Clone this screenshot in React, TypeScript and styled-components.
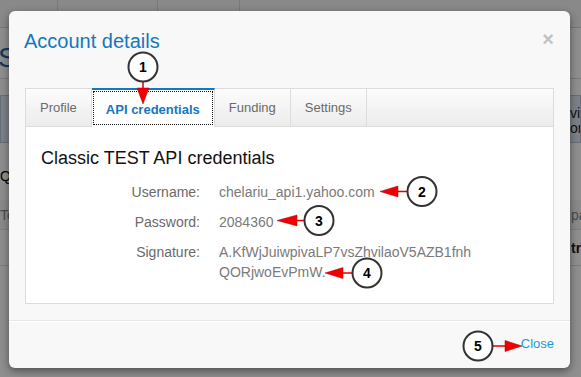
import React from 'react';
import styled, { createGlobalStyle } from 'styled-components';

const GlobalStyle = createGlobalStyle`
  html, body {
    margin: 0;
    padding: 0;
  }
  body {
    width: 581px;
    height: 377px;
    overflow: hidden;
    font-family: "Liberation Sans", Arial, sans-serif;
    background: #fff;
  }
`;

const Page = styled.div`
  position: relative;
  width: 581px;
  height: 377px;
  overflow: hidden;
  background: #fff;
`;

/* the page that sits under the dimmed backdrop */
const BackNav = styled.div`
  display: flex;
  height: 28px;
  background: #f4f4f4;
  border-bottom: 1px solid #d4d4d4;
  box-sizing: border-box;
`;

const NavCell = styled.div<{ $w: number }>`
  width: ${(p) => p.$w}px;
  border-right: 1px solid #d8d8d8;
  box-sizing: border-box;
`;

const BackTitle = styled.div`
  height: 51px;
  border-bottom: 1px solid #dcdcdc;
  box-sizing: border-box;
  padding-top: 15px;
  margin-left: -2px;
  font-size: 28px;
  line-height: 30px;
  color: #1d6aa4;
  white-space: nowrap;
`;

const BackRow = styled.div<{ $h: number; $bg?: string; $border?: string }>`
  display: flex;
  justify-content: space-between;
  align-items: center;
  height: ${(p) => p.$h}px;
  background: ${(p) => p.$bg || 'transparent'};
  border-bottom: ${(p) => (p.$border ? `1px solid ${p.$border}` : 'none')};
  box-sizing: border-box;
  font-size: 14px;
  white-space: nowrap;
`;

const AlertBox = styled.div`
  display: flex;
  justify-content: space-between;
  align-items: center;
  margin-top: 16px;
  height: 48px;
  background: #dfe8f3;
  border: 1px solid #b4c4d8;
  box-sizing: border-box;
  font-size: 14px;
  line-height: 15px;
  color: #223;
  padding-top: 4px;
`;

const EdgeText = styled.div<{ $color?: string; $bold?: boolean }>`
  width: 10px;
  overflow: hidden;
  white-space: nowrap;
  color: ${(p) => p.$color || '#222'};
  font-weight: ${(p) => (p.$bold ? 700 : 400)};
`;

const Backdrop = styled.div`
  position: absolute;
  inset: 0;
  background: rgba(0, 0, 0, 0.44);
`;

/* modal */
const Modal = styled.div`
  position: absolute;
  left: 9px;
  top: 11px;
  width: 561px;
  height: 357px;
  display: flex;
  flex-direction: column;
  background: #f8f8f8;
  border-radius: 6px;
  box-shadow: 0 3px 9px rgba(0, 0, 0, 0.45);
  overflow: hidden;
`;

const Header = styled.div`
  display: flex;
  justify-content: space-between;
  align-items: flex-start;
  height: 66px;
  padding: 18px 16px 0 15px;
  box-sizing: border-box;
`;

const Title = styled.h3`
  margin: 0;
  font-size: 20px;
  line-height: 24px;
  font-weight: 400;
  color: #1577be;
`;

const CloseX = styled.span`
  font-size: 20px;
  line-height: 20px;
  font-weight: 700;
  color: #c2c2c2;
`;

const Body = styled.div`
  padding: 11px 16px 16px;
`;

const TabPanel = styled.div`
  height: 216px;
  display: flex;
  flex-direction: column;
  background: #fff;
  border: 1px solid #dcdcdc;
  box-sizing: border-box;
`;

const TabBar = styled.div`
  display: flex;
  height: 38px;
  background: linear-gradient(#fcfcfc, #ececec);
  border-bottom: 1px solid #dcdcdc;
  box-sizing: border-box;
`;

const Tab = styled.div<{ $active?: boolean }>`
  position: relative;
  display: flex;
  align-items: center;
  padding: 0 14px;
  border-right: 1px solid #dcdcdc;
  font-size: 13px;
  color: ${(p) => (p.$active ? '#1577be' : '#6a6a6a')};
  font-weight: ${(p) => (p.$active ? 700 : 400)};
  background: ${(p) => (p.$active ? '#fff' : 'transparent')};
  ${(p) =>
    p.$active &&
    `
    margin-top: -1px;
    margin-bottom: -1px;
    border-top: 2px solid #1577be;
    padding-top: 1px;
    &::after {
      content: '';
      position: absolute;
      left: 1px;
      right: 1px;
      top: 1px;
      bottom: 2px;
      border: 1px dotted #111;
    }
  `}
`;

const TabContent = styled.div`
  padding: 20px 15px;
`;

const Heading = styled.h4`
  margin: 0 0 13px;
  font-size: 18px;
  line-height: 22px;
  font-weight: 400;
  color: #111;
`;

const Fields = styled.div`
  display: grid;
  grid-template-columns: 159px 1fr;
  column-gap: 19px;
  row-gap: 10px;
  font-size: 14px;
  line-height: 20px;
`;

const Label = styled.div`
  text-align: right;
  color: #6a6a6a;
`;

const Value = styled.div`
  color: #7a7a7a;
`;

const Footer = styled.div`
  display: flex;
  justify-content: flex-end;
  align-items: center;
  height: 48px;
  padding: 0 16px 2px;
  border-top: 1px solid #e6e6e6;
  box-shadow: inset 0 1px 0 #fff;
  box-sizing: border-box;
`;

const CloseLink = styled.a`
  font-size: 13px;
  color: #1b9ad8;
  text-decoration: none;
`;

const Marks = styled.svg`
  position: absolute;
  inset: 0;
  pointer-events: none;
`;

type Callout = { n: number; cx: number; cy: number; line: string; tri: string };

const callouts: Callout[] = [
  { n: 1, cx: 143, cy: 67, line: 'M143 82 V89', tri: '137,88 149,88 143,104' },
  { n: 2, cx: 422, cy: 191.5, line: 'M407 191.5 H397', tri: '398,186 398,197 380,191.5' },
  { n: 3, cx: 319, cy: 220.5, line: 'M304 220.5 H296', tri: '297,215 297,226 277,220.5' },
  { n: 4, cx: 367, cy: 273, line: 'M352 273 H342', tri: '343,267.5 343,278.5 325,273' },
  { n: 5, cx: 478, cy: 346, line: 'M493 346 H506', tri: '505,340.5 505,351.5 522,346' },
];

const Annotations = () => (
  <Marks width="581" height="377" viewBox="0 0 581 377">
    {callouts.map((c) => (
      <g key={c.n}>
        <path d={c.line} stroke="#e00000" strokeWidth="1.5" fill="none" />
        <polygon points={c.tri} fill="#f00000" stroke="#b00000" strokeWidth="0.5" />
        <circle cx={c.cx} cy={c.cy} r="14.5" fill="#fff" stroke="#333" strokeWidth="2" />
        <text
          x={c.cx}
          y={c.cy + 5}
          textAnchor="middle"
          fontFamily='"Liberation Sans", Arial, sans-serif'
          fontSize="14"
          fontWeight="700"
          fill="#000"
        >
          {c.n}
        </text>
      </g>
    ))}
  </Marks>
);

const App = () => (
  <Page>
    <GlobalStyle />
    <BackNav>
      <NavCell $w={58} />
      <NavCell $w={100} />
      <NavCell $w={82} />
    </BackNav>
    <BackTitle>Sandbox test accounts</BackTitle>
    <AlertBox>
      <span />
      <EdgeText $color="#223">
        vices
        <br />
        ort
      </EdgeText>
    </AlertBox>
    <BackRow $h={57}>
      <span style={{ paddingTop: 8 }}>Q</span>
    </BackRow>
    <BackRow $h={30} $bg="#f6f6f6" $border="#e0e0e0">
      <EdgeText $color="#888">Total</EdgeText>
      <EdgeText $color="#888">pa</EdgeText>
    </BackRow>
    <BackRow $h={36} $border="#ddd">
      <span />
      <EdgeText $bold>try</EdgeText>
    </BackRow>
    <Backdrop />
    <Modal>
      <Header>
        <Title>Account details</Title>
        <CloseX>×</CloseX>
      </Header>
      <Body>
        <TabPanel>
          <TabBar>
            <Tab>Profile</Tab>
            <Tab $active>API credentials</Tab>
            <Tab>Funding</Tab>
            <Tab>Settings</Tab>
          </TabBar>
          <TabContent>
            <Heading>Classic TEST API credentials</Heading>
            <Fields>
              <Label>Username:</Label>
              <Value>chelariu_api1.yahoo.com</Value>
              <Label>Password:</Label>
              <Value>2084360</Value>
              <Label>Signature:</Label>
              <Value>
                A.KfWjJuiwpivaLP7vsZhvilaoV5AZB1fnh
                <br />
                QORjwoEvPmW.
              </Value>
            </Fields>
          </TabContent>
        </TabPanel>
      </Body>
      <Footer>
        <CloseLink href="#">Close</CloseLink>
      </Footer>
    </Modal>
    <Annotations />
  </Page>
);

export default App;
